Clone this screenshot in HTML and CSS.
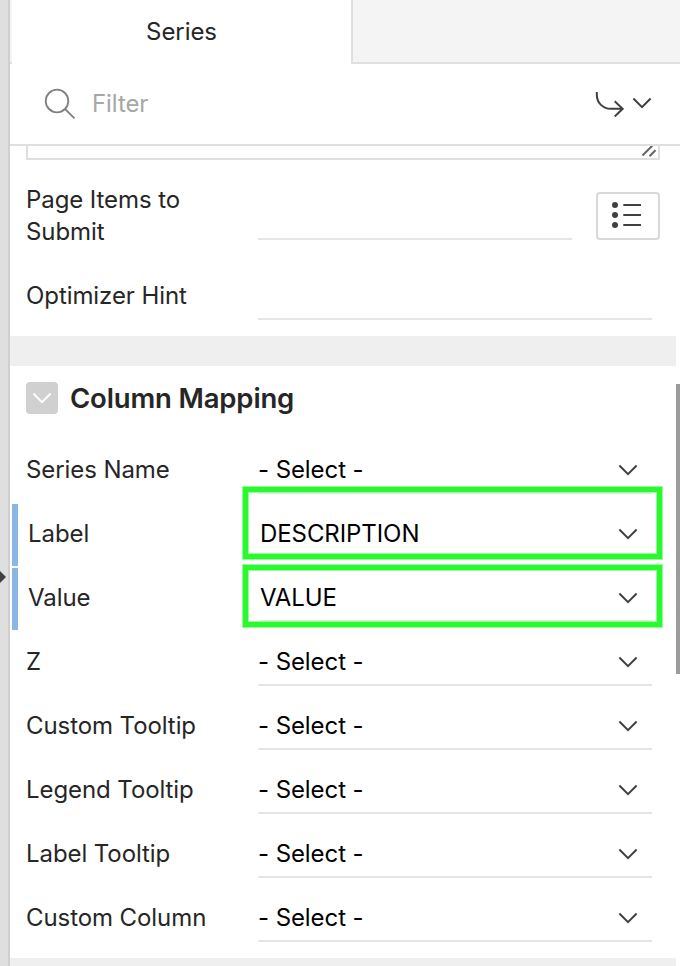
FILE: index.html
```html
<!DOCTYPE html>
<html lang="en">
<head>
<meta charset="utf-8">
<title>Series</title>
<link rel="stylesheet" href="styles.css">
</head>
<body>
<svg class="defs" width="0" height="0" aria-hidden="true">
  <symbol id="chevron" viewBox="0 0 20 12"><path d="M1.4 1.5 10 10.2 18.6 1.5"/></symbol>
</svg>
<div class="app">
  <div class="splitter"><svg class="splitter-arrow" viewBox="0 0 6 12"><path d="M0 0 6 6 0 12z"/></svg></div>
  <main class="panel">
    <div class="tabs"><div class="tab-start"></div><div class="tab">Series</div><div class="tab-rest"></div></div>
    <div class="toolbar">
      <svg class="search-icon" viewBox="0 0 32 32"><circle cx="13" cy="13" r="11.3"/><path d="M21 21 30.5 30.3"/></svg>
      <span class="filter">Filter</span>
      <svg class="goto-icon" viewBox="0 0 30 28"><path d="M2.8 2v2.5C2.8 13 9 18.8 17 18.8h11M20.7 11.2l8 7.6-8 7.6"/></svg>
      <svg class="chevron"><use href="#chevron"/></svg>
    </div>
    <div class="content">
      <div class="textarea-end"><svg class="grip" viewBox="0 0 16 12"><path d="M1.5 9.5 11.5-.5M8.5 10.2 14.5 4.2"/></svg></div>
      <div class="row row-items">
        <div class="label">Page Items to Submit</div>
        <div class="field"></div>
        <div class="list-button"><svg viewBox="0 0 30 28"><g class="dots"><circle cx="4" cy="4" r="3"/><circle cx="4" cy="14" r="3"/><circle cx="4" cy="24" r="3"/></g><path d="M12.3 4H30M12.3 14H30M12.3 24H30"/></svg></div>
      </div>
      <div class="row row-hint"><div class="label">Optimizer Hint</div><div class="field"></div></div>
      <div class="band"></div>
      <section>
        <h2><span class="toggle"><svg class="chevron"><use href="#chevron"/></svg></span><span>Column Mapping</span></h2>
        <div class="row"><div class="label">Series Name</div><div class="field"><span>- Select -</span><svg class="chevron"><use href="#chevron"/></svg></div></div>
        <div class="row changed"><div class="label">Label</div><div class="field"><span>DESCRIPTION</span><svg class="chevron"><use href="#chevron"/></svg></div><div class="highlight highlight-label"></div></div>
        <div class="row changed"><div class="label">Value</div><div class="field"><span>VALUE</span><svg class="chevron"><use href="#chevron"/></svg></div><div class="highlight highlight-value"></div></div>
        <div class="row"><div class="label">Z</div><div class="field"><span>- Select -</span><svg class="chevron"><use href="#chevron"/></svg></div></div>
        <div class="row"><div class="label">Custom Tooltip</div><div class="field"><span>- Select -</span><svg class="chevron"><use href="#chevron"/></svg></div></div>
        <div class="row"><div class="label">Legend Tooltip</div><div class="field"><span>- Select -</span><svg class="chevron"><use href="#chevron"/></svg></div></div>
        <div class="row"><div class="label">Label Tooltip</div><div class="field"><span>- Select -</span><svg class="chevron"><use href="#chevron"/></svg></div></div>
        <div class="row"><div class="label">Custom Column</div><div class="field"><span>- Select -</span><svg class="chevron"><use href="#chevron"/></svg></div></div>
      </section>
      <div class="band band-last"></div>
      <div class="scrollbar"></div>
    </div>
  </main>
</div>
</body>
</html>
```

FILE: styles.css
```css
* { box-sizing: border-box; }
body { margin: 0; background: #fff; color: #262626; font: 24px/32px Inter, "Liberation Sans", sans-serif; letter-spacing: -0.08px; font-feature-settings: "calt" 0; overflow: hidden; }
svg { display: block; flex: none; fill: none; stroke: #404040; stroke-width: 2; }
.defs { position: absolute; }
.app { display: flex; height: 966px; }
.splitter { width: 10px; flex: none; display: flex; background: #dfdfdf; border-right: 2px solid #cfcfcf; }
.splitter-arrow { width: 6px; height: 12px; margin-top: 571px; fill: #404040; stroke: none; }
.panel { flex: 1; min-width: 0; }
.tabs { display: flex; height: 64px; }
.tab-start { width: 2px; background: #f4f4f4; border-bottom: 2px solid #dfdfdf; }
.tab { width: 339px; text-align: center; line-height: 63px; }
.tab-rest { flex: 1; background: #f4f4f4; border: solid #dfdfdf; border-width: 0 0 2px 2px; }
.toolbar { display: flex; align-items: center; height: 82px; padding: 0 28px 0 34px; border-bottom: 2px solid #dfdfdf; }
.search-icon { width: 32px; height: 32px; stroke: #808080; stroke-width: 1.8; }
.filter { flex: 1; margin-left: 16px; color: #a6a6a6; }
.goto-icon { width: 30px; height: 28px; margin-right: 8px; }
.chevron { width: 20px; height: 12px; }
.toolbar .chevron { margin-bottom: 2px; }
.content { position: relative; height: 820px; overflow: hidden; }
.textarea-end { width: 634px; height: 14px; margin-left: 16px; border: 2px solid #dfdfdf; border-top: 0; display: flex; justify-content: flex-end; }
.grip { width: 16px; height: 12px; margin-right: 1px; stroke: #666; }
.row { position: relative; display: flex; align-items: center; height: 64px; padding-left: 16px; }
.label { width: 232px; padding-right: 50px; flex: none; white-space: nowrap; }
.field { display: flex; align-items: center; justify-content: space-between; width: 394px; height: 48px; padding: 2px 14px 0 0; border-bottom: 2px solid #e5e5e5; color: #000; }
.row-items { height: 80px; margin-top: 24px; align-items: flex-start; }
.row-items .label { white-space: normal; }
.row-items .field { width: 314px; margin-top: 8px; }
.list-button { display: flex; width: 64px; height: 48px; margin: 8px 0 0 24px; padding: 7px 0 0 13px; border: 2px solid #d9d9d9; border-radius: 4px; }
.list-button svg { width: 30px; height: 28px; }
.list-button .dots { fill: #404040; stroke: none; }
.row-hint { margin-bottom: 8px; }
.band { width: 666px; height: 30px; background: #efefef; }
.band-last { margin-top: 8px; }
h2 { display: flex; align-items: center; gap: 12px; height: 72px; margin: 0; padding: 0 0 8px 16px; font-size: 27.5px; font-weight: 580; letter-spacing: -0.15px; }
.toggle { display: flex; align-items: center; justify-content: center; width: 32px; height: 32px; border-radius: 4px; background: #d0d0d0; }
.toggle .chevron { stroke: #fff; }
.changed::before { content: ""; width: 6px; height: 62px; margin: 2px 10px 0 -14px; background: #8ab6e3; }
.changed .field { width: 392px; }
.highlight { position: absolute; left: 233px; width: 419px; border: 5px solid #2bf92f; box-shadow: 0 0 0 1px #95fc97, inset 0 0 0 1px #95fc97; }
.highlight-label { top: -15px; height: 72px; }
.highlight-value { top: -1px; height: 62px; }
.scrollbar { position: absolute; top: 238px; right: 0; width: 4px; height: 290px; background: #9c9c9c; }
```
